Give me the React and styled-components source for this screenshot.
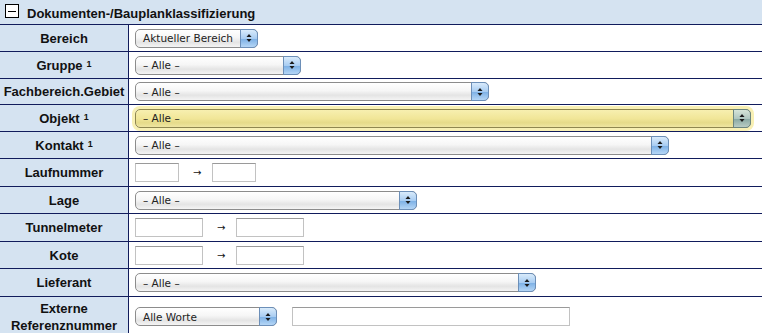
import React from "react";
import styled, { createGlobalStyle, css } from "styled-components";

const GlobalStyle = createGlobalStyle`
  body {
    margin: 0;
    background: #ffffff;
    font-family: "Liberation Sans", Arial, sans-serif;
  }
`;

const navy = "#111c5c";
const paleBlue = "#d5e3f1";

const Panel = styled.div`
  width: 762px;
  overflow: hidden;
`;

const Header = styled.div`
  height: 25px;
  box-sizing: border-box;
  background: ${paleBlue};
  border-bottom: 1px solid ${navy};
  display: flex;
  align-items: center;
  padding-left: 5px;
  gap: 8px;
`;

const Toggle = styled.div`
  width: 12px;
  height: 12px;
  border: 1px solid #000;
  background: #fff;
  display: flex;
  align-items: center;
  justify-content: center;
  margin-top: -2px;

  &::after {
    content: "";
    width: 8px;
    height: 1px;
    background: #000;
  }
`;

const Title = styled.span`
  font-weight: bold;
  font-size: 13px;
  color: #111;
  margin-top: 3px;
`;

const Row = styled.div`
  display: grid;
  grid-template-columns: 129px 1fr;
  height: ${({ $h }) => $h}px;
  box-sizing: border-box;
  border-bottom: 1px solid ${navy};
`;

const Label = styled.div`
  background: ${paleBlue};
  border-right: 1px solid ${navy};
  display: flex;
  align-items: center;
  justify-content: center;
  text-align: center;
  font-weight: bold;
  font-size: 13px;
  line-height: 17px;
  color: #111;

  sup {
    font-size: 9px;
    margin-left: 4px;
    vertical-align: 3px;
    line-height: 0;
  }
`;

const Value = styled.div`
  display: flex;
  align-items: center;
  padding-left: 6px;
`;

const SelectBox = styled.div`
  position: relative;
  width: ${({ $w }) => $w}px;
  height: 19px;
  box-sizing: border-box;
  border: 1px solid #8c8c8c;
  border-radius: 5px;
  background: linear-gradient(#ffffff 0%, #f6f6f6 45%, #e4e4e4 72%, #f4f4f4 100%);
  display: flex;
  align-items: center;
  padding-left: 7px;
  font-family: "DejaVu Sans", sans-serif;
  font-size: 10.5px;
  color: #222;
  ${({ $focus }) =>
    $focus &&
    css`
      background: linear-gradient(#f7efb0 0%, #f1e698 50%, #e6db8a 75%, #efe6a2 100%);
      border-color: #8f8750;
      box-shadow: 0 0 0 3px #f8f0b4;
    `}
`;

const Stepper = styled.div`
  position: absolute;
  right: -1px;
  top: -1px;
  bottom: -1px;
  width: 16px;
  border: 1px solid #6c8fb8;
  border-radius: 0 5px 5px 0;
  background: linear-gradient(#d9ebfb 0%, #a9cdf2 50%, #7fb2e6 55%, #b5d6f6 100%);
  display: flex;
  align-items: center;
  justify-content: center;
  ${({ $focus }) =>
    $focus &&
    css`
      border-color: #6b8580;
      background: linear-gradient(#d6e4d8 0%, #afc6c0 50%, #8aa9a4 55%, #b8ccc4 100%);
    `}
`;

const Arrows = () => (
  <svg width="6" height="10" viewBox="0 0 6 10">
    <path d="M3 1 L5.5 4 L0.5 4 Z" fill="#1a1a1a" />
    <path d="M3 9 L5.5 6 L0.5 6 Z" fill="#1a1a1a" />
  </svg>
);

const Select = ({ width, text, focus }) => (
  <SelectBox $w={width} $focus={focus}>
    {text}
    <Stepper $focus={focus}>
      <Arrows />
    </Stepper>
  </SelectBox>
);

const TextInput = styled.div`
  width: ${({ $w }) => $w}px;
  height: 19px;
  box-sizing: border-box;
  border: 1px solid #c2c2c2;
  border-top-color: #9a9a9a;
  background: #fff;
  margin-left: ${({ $ml }) => $ml || 0}px;
`;

const RangeArrow = styled.span`
  font-family: "DejaVu Sans", sans-serif;
  font-size: 10px;
  color: #111;
  margin: 0 9px 0 14px;
  width: 10px;
  display: inline-block;
`;

const rows = [
  { label: "Bereich", h: 27, type: "select", w: 123, text: "Aktueller Bereich" },
  { label: "Gruppe", sup: true, h: 27, type: "select", w: 166, text: "– Alle –" },
  { label: "Fachbereich.Gebiet", h: 26, type: "select", w: 354, text: "– Alle –" },
  { label: "Objekt", sup: true, h: 27, type: "select", w: 616, text: "– Alle –", focus: true },
  { label: "Kontakt", sup: true, h: 27, type: "select", w: 534, text: "– Alle –" },
  { label: "Laufnummer", h: 28, type: "range", w: 44 },
  { label: "Lage", h: 27, type: "select", w: 282, text: "– Alle –" },
  { label: "Tunnelmeter", h: 28, type: "range", w: 68 },
  { label: "Kote", h: 27, type: "range", w: 68 },
  { label: "Lieferant", h: 28, type: "select", w: 401, text: "– Alle –" },
];

export default function App() {
  return (
    <Panel>
      <GlobalStyle />
      <Header>
        <Toggle />
        <Title>Dokumenten-/Bauplanklassifizierung</Title>
      </Header>
      {rows.map((r) => (
        <Row key={r.label} $h={r.h}>
          <Label>
            <span>
              {r.label}
              {r.sup && <sup>1</sup>}
            </span>
          </Label>
          <Value>
            {r.type === "select" ? (
              <Select width={r.w} text={r.text} focus={r.focus} />
            ) : (
              <>
                <TextInput $w={r.w} />
                <RangeArrow>→</RangeArrow>
                <TextInput $w={r.w} />
              </>
            )}
          </Value>
        </Row>
      ))}
      <Row $h={40}>
        <Label>
          Externe
          <br />
          Referenznummer
        </Label>
        <Value>
          <Select width={142} text="Alle Worte" />
          <TextInput $w={278} $ml={15} />
        </Value>
      </Row>
    </Panel>
  );
}
